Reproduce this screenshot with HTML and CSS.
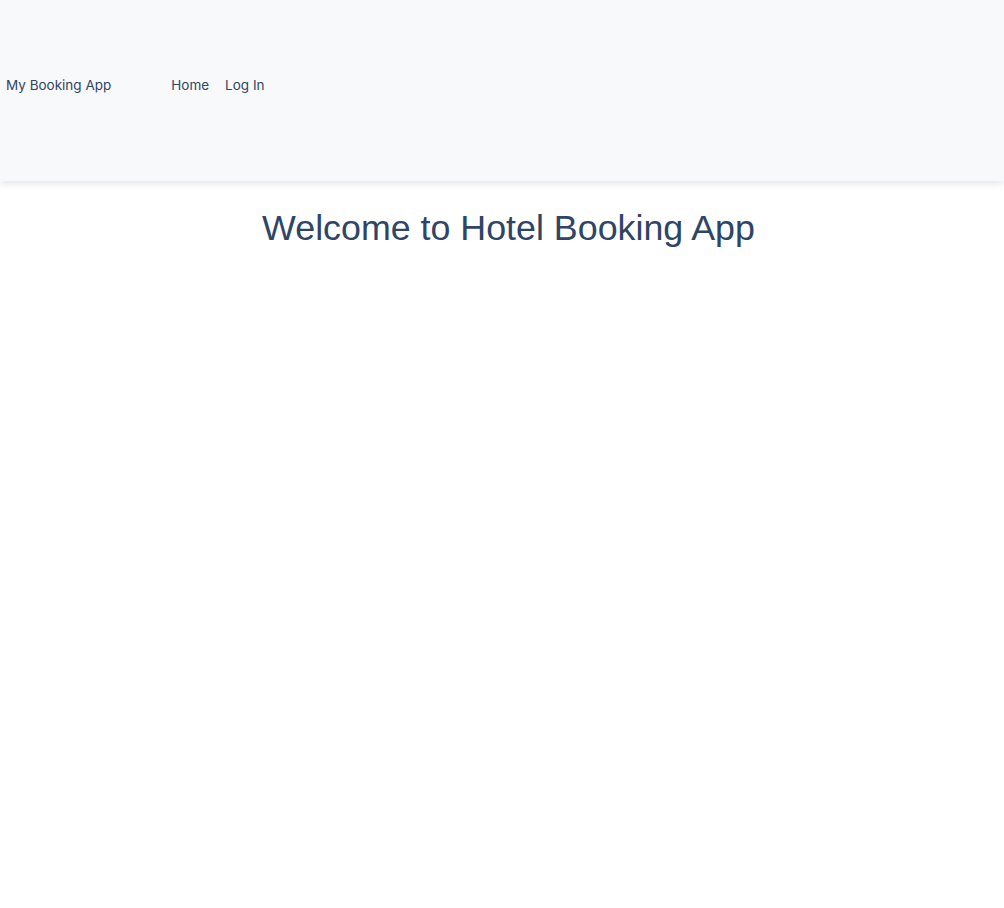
FILE: index.html
```html
<!DOCTYPE html>
<html>
<head>
<meta charset="utf-8">
<link rel="stylesheet" href="styles.css">
</head>
<body>
<header class="navbar">
  <span class="brand">My Booking App</span>
  <nav class="links">
    <a class="link" href="#">Home</a>
    <a class="link" href="#">Log In</a>
  </nav>
</header>
<main class="content">
  <h1 class="title">Welcome to Hotel Booking App</h1>
</main>
</body>
</html>
```
FILE: styles.css
```css
html, body {
  margin: 0;
  padding: 0;
  background: #ffffff;
}
body {
  color: #2e4566;
  font-family: "Liberation Sans", Arial, sans-serif;
}
.navbar {
  box-sizing: border-box;
  height: 181px;
  background: #f8f9fb;
  box-shadow: 0 2px 8px rgba(0, 0, 0, 0.12);
  display: flex;
  align-items: center;
  padding: 0 6px 11px;
  font-family: Inter, "Noto Sans", sans-serif;
  font-size: 13.5px;
}
.brand {
  color: #2e4566;
  margin-right: 60px;
}
.links {
  display: flex;
  gap: 16px;
}
.link {
  color: #2e4566;
  text-decoration: none;
}
.content {
  text-align: center;
  padding-left: 13px;
}
.title {
  margin: 26px 0 0;
  font-weight: normal;
  font-size: 35.8px;
  line-height: 42px;
}
```
